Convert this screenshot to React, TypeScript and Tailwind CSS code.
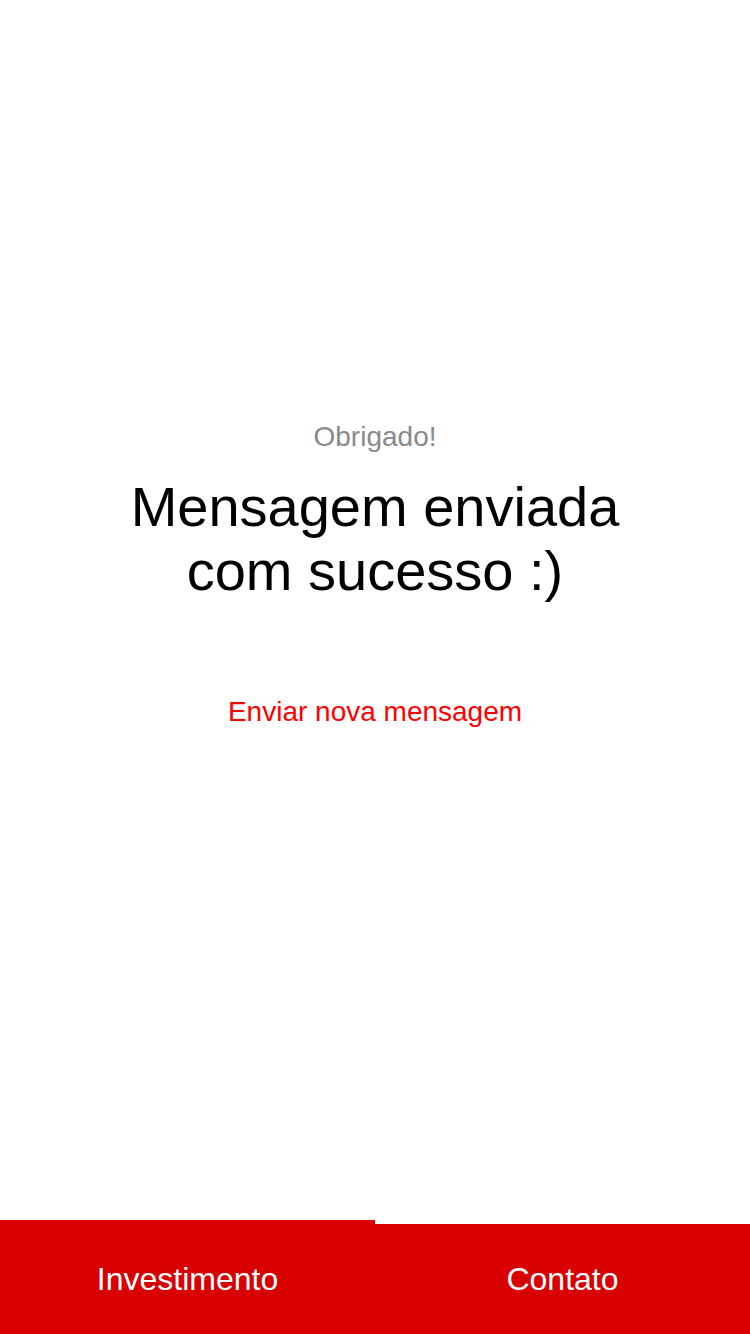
function TabButton({ label, active }: { label: string; active?: boolean }) {
  return (
    <button
      className={
        active
          ? "flex h-[114px] flex-1 items-center justify-center bg-[#d80000] pt-1 text-[32px] text-white"
          : "flex h-[110px] flex-1 items-center justify-center bg-[#d80000] text-[32px] text-white"
      }
    >
      {label}
    </button>
  );
}

function App() {
  return (
    <div
      className="flex h-[1334px] w-[750px] flex-col bg-white"
      style={{ fontFamily: '"Liberation Sans", Arial, sans-serif' }}
    >
      <div className="flex flex-1 flex-col items-center pt-[420px] text-center">
        <p className="text-[28px] leading-[34px] text-[#8a8a8a]">Obrigado!</p>
        <h1 className="mt-[21px] text-[56px] leading-[64px] text-black">
          Mensagem enviada
          <br />
          com sucesso :)
        </h1>
        <a className="mt-[92px] text-[28px] leading-[34px] text-[#ff0000]" href="#">
          Enviar nova mensagem
        </a>
      </div>
      <nav className="flex items-end">
        <TabButton label="Investimento" active />
        <TabButton label="Contato" />
      </nav>
    </div>
  );
}

export default App;
